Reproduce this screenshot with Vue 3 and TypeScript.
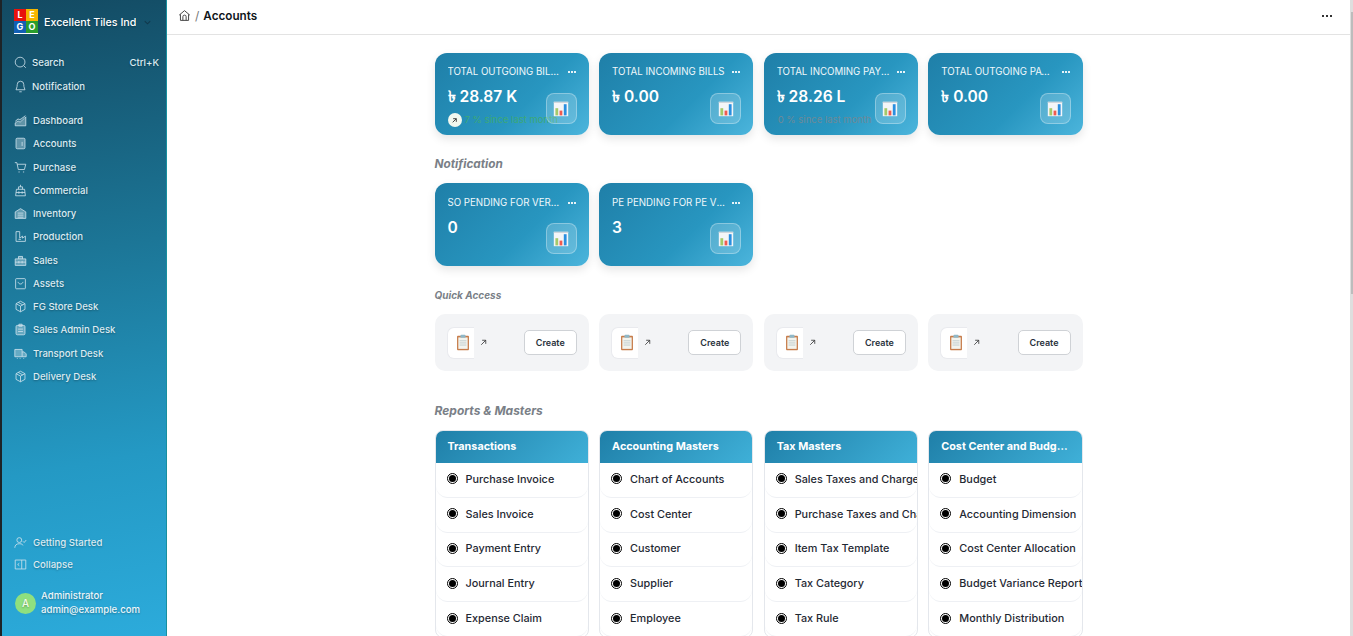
<script setup lang="ts">
interface NavItem {
  label: string
  icon: string
  filled?: boolean
}

interface Stat {
  title: string
  value: string
  note?: string
  up?: boolean
}

interface Section {
  title: string
  links: string[]
}

// icon paths drawn on a 16x16 box
const navItems: NavItem[] = [
  { label: 'Dashboard', filled: true, icon: 'M1.5 14.5v-3.500L5 8.500l2.500 1.500L12.500 5.500 14.500 3.500v11zM1.500 9L5 6l2.500 1.500L14 2' },
  { label: 'Accounts', filled: true, icon: 'M4 1.500h8A1.500 1.500 0 0 1 13.500 3v10a1.500 1.500 0 0 1-1.500 1.500H4A1.500 1.500 0 0 1 2.500 13V3A1.500 1.500 0 0 1 4 1.500zM10 6v5' },
  { label: 'Purchase', icon: 'M1 2h2.500l1.800 8.500h7.500l1.700-6.500H4M5.500 13.500h1.500M11 13.500h1.500' },
  { label: 'Commercial', icon: 'M3 6.500h10l1 8H2zM5.500 6.500V3.500h5v3M8 1v2.500M2.500 10.500h11M6 9v3M10 9v3' },
  { label: 'Inventory', filled: true, icon: 'M1.500 6L8 2l6.500 4v8h-13zM4.500 7.500h7M4.500 10h7M4.500 12.500h7' },
  { label: 'Production', icon: 'M2.500 2v12h11.500V7.500l-3.500 2.500V7.500L7 10V2zM5.500 11.500h3' },
  { label: 'Sales', filled: true, icon: 'M1.500 6h13v8h-13zM5.500 6V3h5v3M1.500 10h13M6 8.500v3M10 8.500v3' },
  { label: 'Assets', icon: 'M3 2h10a1 1 0 0 1 1 1v10.500a1 1 0 0 1-1 1H3a1 1 0 0 1-1-1V3a1 1 0 0 1 1-1zM5 6c.5 3.500 5.500 3.500 6 0' },
  { label: 'FG Store Desk', icon: 'M8 1.500l5.500 3v7L8 14.500l-5.500-3v-7zM2.500 4.500L8 7.500l5.500-3M8 7.500v7M5.200 3l5.600 3' },
  { label: 'Sales Admin Desk', filled: true, icon: 'M4 3h8a1.500 1.500 0 0 1 1.500 1.500v8.500a1.500 1.500 0 0 1-1.500 1.500H4A1.500 1.500 0 0 1 2.500 13V4.500A1.500 1.500 0 0 1 4 3zM6 1.500h4V4H6zM5 7.500h6M5 10.500h6' },
  { label: 'Transport Desk', filled: true, icon: 'M1 3h9v9H1zM10 6h2.500l2.500 2.500V12h-5M3.500 14h1M7 14h1M11.500 14h1' },
  { label: 'Delivery Desk', icon: 'M8 1.500l5.500 3v7L8 14.500l-5.500-3v-7zM2.500 4.500L8 7.500l5.500-3M8 7.500v7M5.200 3l5.600 3' },
]

const stats: Stat[] = [
  { title: 'TOTAL OUTGOING BILLS', value: '৳ 28.87 K', note: '7 % since last month', up: true },
  { title: 'TOTAL INCOMING BILLS', value: '৳ 0.00' },
  { title: 'TOTAL INCOMING PAYMENTS', value: '৳ 28.26 L', note: '0 % since last month' },
  { title: 'TOTAL OUTGOING PAYMENTS', value: '৳ 0.00' },
]

const pending: Stat[] = [
  { title: 'SO PENDING FOR VERIFICATION', value: '0' },
  { title: 'PE PENDING FOR PE VERIFICATION', value: '3' },
]

const sections: Section[] = [
  { title: 'Transactions', links: ['Purchase Invoice', 'Sales Invoice', 'Payment Entry', 'Journal Entry', 'Expense Claim'] },
  { title: 'Accounting Masters', links: ['Chart of Accounts', 'Cost Center', 'Customer', 'Supplier', 'Employee'] },
  { title: 'Tax Masters', links: ['Sales Taxes and Charges Template', 'Purchase Taxes and Charges Template', 'Item Tax Template', 'Tax Category', 'Tax Rule'] },
  { title: 'Cost Center and Budgeting', links: ['Budget', 'Accounting Dimension', 'Cost Center Allocation', 'Budget Variance Report', 'Monthly Distribution'] },
]
</script>

<template>
  <div class="app">
    <aside class="sidebar">
      <div class="brand">
        <div class="logo">
          <span class="red">L</span>
          <span class="yellow">E</span>
          <span class="blue">G</span>
          <span class="green">O</span>
        </div>
        <span class="brand-name">Excellent Tiles India</span>
        <svg class="chevron" viewBox="0 0 16 16"><path d="M4 6l4 4 4-4" /></svg>
      </div>

      <div class="side-top">
        <div class="side-row">
          <svg class="ico" viewBox="0 0 16 16"><circle cx="7.500" cy="7.500" r="6" /><path d="M12 12l2.500 2.500" /></svg>
          <span>Search</span>
          <span class="kbd">Ctrl+K</span>
        </div>
        <div class="side-row">
          <svg class="ico" viewBox="0 0 16 16"><path d="M8 1.500a4 4 0 0 1 4 4c0 4 1.500 5.500 1.500 6.500h-11c0-1 1.500-2.500 1.500-6.500a4 4 0 0 1 4-4zM6.500 14.500h3" /></svg>
          <span>Notification</span>
        </div>
      </div>

      <nav class="nav">
        <div v-for="item in navItems" :key="item.label" class="nav-row">
          <svg class="ico" :class="{ filled: item.filled }" viewBox="0 0 16 16"><path :d="item.icon" /></svg>
          <span>{{ item.label }}</span>
        </div>
      </nav>

      <div class="side-bottom">
        <div class="nav-row">
          <svg class="ico" viewBox="0 0 16 16"><circle cx="6.500" cy="5" r="3" /><path d="M1 14.500c0-3 2-5 5.500-5s4 1 4.500 2M11 6.500l1.500 1.500 2.500-3" /></svg>
          <span>Getting Started</span>
        </div>
        <div class="nav-row">
          <svg class="ico" viewBox="0 0 16 16"><path d="M1.500 2.500h13v11h-13zM9.500 2.500v11M6.500 6.500L4.500 8l2 1.500" /></svg>
          <span>Collapse</span>
        </div>
        <div class="user">
          <div class="avatar">A</div>
          <div class="user-text">
            <div>Administrator</div>
            <div>admin@example.com</div>
          </div>
        </div>
      </div>
    </aside>

    <div class="main">
      <header class="topbar">
        <svg class="home" viewBox="0 0 16 16"><path d="M1.500 7.500L8 2l6.500 5.500M3 6.500V14h10V6.500M6 14V9.500a2 2 0 0 1 4 0V14" /></svg>
        <span class="slash">/</span>
        <span class="crumb">Accounts</span>
        <div class="dots"><i></i><i></i><i></i></div>
      </header>

      <div class="content">
        <div class="grid">
          <div v-for="s in stats" :key="s.title" class="stat">
            <div class="stat-head">
              <span class="stat-title">{{ s.title }}</span>
              <span class="stat-more"><i></i><i></i><i></i></span>
            </div>
            <div class="stat-value">{{ s.value }}</div>
            <div v-if="s.note" class="stat-note" :class="{ up: s.up }">
              <span v-if="s.up" class="up-badge">
                <svg viewBox="0 0 10 10"><path d="M3 7l4-4M3.500 3H7v3.500" /></svg>
              </span>
              {{ s.note }}
            </div>
            <div class="stat-icon">
              <svg viewBox="0 0 20 20">
                <rect x="1" y="1" width="18" height="18" fill="#f4f6f8" />
                <rect x="1" y="1" width="18" height="1.500" fill="#cfd6dc" />
                <rect x="3" y="9" width="3.500" height="9" fill="#a4c96a" />
                <rect x="8.200" y="12" width="3.500" height="6" fill="#ef5b50" />
                <rect x="13.500" y="4" width="3.500" height="14" fill="#2a8fe0" />
              </svg>
            </div>
          </div>
        </div>

        <h3 class="heading notif">Notification</h3>
        <div class="grid">
          <div v-for="s in pending" :key="s.title" class="stat tall">
            <div class="stat-head">
              <span class="stat-title">{{ s.title }}</span>
              <span class="stat-more"><i></i><i></i><i></i></span>
            </div>
            <div class="stat-value">{{ s.value }}</div>
            <div class="stat-icon">
              <svg viewBox="0 0 20 20">
                <rect x="1" y="1" width="18" height="18" fill="#f4f6f8" />
                <rect x="1" y="1" width="18" height="1.500" fill="#cfd6dc" />
                <rect x="3" y="9" width="3.500" height="9" fill="#a4c96a" />
                <rect x="8.200" y="12" width="3.500" height="6" fill="#ef5b50" />
                <rect x="13.500" y="4" width="3.500" height="14" fill="#2a8fe0" />
              </svg>
            </div>
          </div>
        </div>

        <h3 class="heading quick-title">Quick Access</h3>
        <div class="grid">
          <div v-for="n in 4" :key="n" class="quick">
            <div class="quick-icon">
              <svg viewBox="0 0 16 20">
                <rect x="1" y="2" width="14" height="17" rx="1" fill="#c77c4a" />
                <rect x="2.500" y="4" width="11" height="13.500" fill="#f3f4ee" />
                <path d="M4 8h8M4 10.500h8M4 13h8" stroke="#b9c7c9" stroke-width="1" />
                <rect x="5" y="1" width="6" height="3.500" rx="1" fill="#8fb8c8" />
              </svg>
            </div>
            <svg class="quick-arrow" viewBox="0 0 10 10"><path d="M2.500 7.500l5-5M3.500 2.500h4v4" /></svg>
            <button class="create">Create</button>
          </div>
        </div>

        <h3 class="heading reports">Reports &amp; Masters</h3>
        <div class="grid">
          <div v-for="sec in sections" :key="sec.title" class="report">
            <div class="report-head">{{ sec.title }}</div>
            <div v-for="link in sec.links" :key="link" class="report-row">
              <span class="bullet"></span>
              <span class="report-link">{{ link }}</span>
            </div>
          </div>
        </div>
      </div>
    </div>

    <div class="scrollbar"><div class="thumb"></div></div>
  </div>
</template>

<style>
html,
body {
  margin: 0;
  height: 100%;
  overflow: hidden;
  background: #fff;
}
</style>

<style scoped>
.app {
  display: flex;
  height: 636px;
  font-family: Inter, "Noto Sans", sans-serif;
  color: #1f2933;
}

.sidebar {
  width: 167px;
  flex: none;
  box-sizing: border-box;
  height: 636px;
  display: flex;
  flex-direction: column;
  padding: 0 0 0 2px;
  background: linear-gradient(170deg, #134a62 0%, #1c7697 40%, #2499c4 72%, #2cabdb 100%);
  box-shadow: inset 2px 0 0 #1d2327, inset -1px 0 0 #17909f;
  color: #dcebf2;
  font-size: 9.600px;
  font-weight: 500;
  text-shadow: 0 1px 2px rgba(0, 0, 0, 0.3);
}

.brand {
  display: flex;
  align-items: center;
  height: 36px;
  margin-top: 4px;
  padding-left: 12px;
  box-sizing: border-box;
}

.logo {
  width: 24px;
  height: 24px;
  flex: none;
  display: grid;
  grid-template-columns: 1fr 1fr;
  grid-template-rows: 1fr 1fr;
  border-bottom: 1px solid #fff;
  font-size: 9px;
  font-weight: 700;
  line-height: 12px;
  text-align: center;
  text-shadow: none;
  margin-top: -1px;
}

.logo .red { background: #e8120c; color: #fff; }
.logo .yellow { background: #f5b600; color: #fff; }
.logo .blue { background: #125fb5; color: #fff; }
.logo .green { background: #2a9d2c; color: #fff; }

.brand-name {
  width: 92px;
  margin-left: 6px;
  overflow: hidden;
  white-space: nowrap;
  font-size: 10.700px;
  color: #fff;
}

.chevron {
  width: 11px;
  height: 11px;
  margin-left: 6px;
  fill: none;
  stroke: #11394c;
  stroke-width: 1.500;
}

.side-top {
  margin-top: 10px;
}

.side-row,
.nav-row {
  display: flex;
  align-items: center;
  gap: 6px;
  padding-left: 12px;
}

.side-row {
  height: 24px;
  gap: 5px;
}

.nav-row {
  height: 23.250px;
}

.ico {
  width: 13px;
  height: 13px;
  flex: none;
  fill: none;
  stroke: #cfe3ec;
  stroke-width: 1;
}

.ico.filled {
  fill: rgba(207, 227, 236, 0.4);
}

.kbd {
  margin-left: auto;
  margin-right: 8px;
}

.nav {
  margin-top: 11px;
}

.side-bottom {
  margin-top: auto;
  padding-bottom: 19px;
}

.side-bottom .nav-row {
  height: 22px;
}

.user {
  display: flex;
  align-items: center;
  gap: 5px;
  margin-top: 14px;
  padding-left: 13px;
}

.avatar {
  width: 21px;
  height: 21px;
  border-radius: 50%;
  background: #8fe07f;
  color: #f3fbe9;
  font-size: 10px;
  line-height: 21px;
  text-align: center;
  flex: none;
}

.user-text {
  line-height: 14px;
  color: #eef6fa;
}

.main {
  flex: 1;
  min-width: 0;
  height: 636px;
  overflow: hidden;
  background: #fff;
}

/* static scrollbar strip, the real one is hidden in this window */
.scrollbar {
  width: 3px;
  flex: none;
  background: #dedede;
}

.thumb {
  width: 2px;
  height: 282px;
  margin: 12px 0 0 1px;
  background: #bcbcbc;
}

.topbar {
  display: flex;
  align-items: center;
  height: 35px;
  box-sizing: border-box;
  padding: 0 18px 3px 11px;
  border-bottom: 1px solid #e3e3e3;
}

.home {
  width: 13px;
  height: 13px;
  fill: none;
  stroke: #444;
  stroke-width: 1.200;
}

.slash {
  margin: 0 4px;
  font-size: 12px;
  color: #777;
}

.crumb {
  font-size: 11.700px;
  font-weight: 600;
  color: #10151a;
}

.dots {
  display: flex;
  gap: 2px;
  margin-left: auto;
}

.dots i {
  display: block;
  width: 2px;
  height: 2px;
  background: #333;
}

.content {
  width: 648px;
  margin: 0 auto;
  padding: 18px 0 40px;
}

.grid {
  display: grid;
  grid-template-columns: repeat(4, minmax(0, 1fr));
  column-gap: 10.330px;
}

.stat {
  position: relative;
  height: 82px;
  box-sizing: border-box;
  padding: 13px 13px 0;
  border-radius: 12px;
  background: linear-gradient(135deg, #1f7fa8 0%, #2896c0 60%, #4cb5dc 100%);
  box-shadow: 0 4px 10px rgba(0, 0, 0, 0.1);
  color: #fff;
}

.stat.tall {
  height: 83px;
  padding-top: 14px;
}

.stat-head {
  display: flex;
  align-items: center;
  justify-content: space-between;
  gap: 5px;
  font-size: 9.700px;
  line-height: 12px;
  color: #f0f8fb;
}

.stat-title {
  max-width: 113.500px;
  overflow: hidden;
  white-space: nowrap;
  text-overflow: ellipsis;
}

.stat-more {
  display: flex;
  flex: none;
  gap: 1px;
}

.stat-more i {
  display: block;
  width: 2px;
  height: 2px;
  background: #e6f3f8;
}

.stat-value {
  margin-top: 9px;
  font-size: 15.600px;
  font-weight: 600;
  line-height: 20px;
}

.stat-note {
  position: absolute;
  left: 14px;
  bottom: 8px;
  display: flex;
  align-items: center;
  gap: 3px;
  font-size: 9.500px;
  line-height: 14px;
  white-space: nowrap;
  color: #6d8a98;
}

.stat-note.up {
  color: #3ca878;
}

.up-badge {
  display: inline-flex;
  width: 14px;
  height: 14px;
  border-radius: 50%;
  background: #f1f8ef;
  align-items: center;
  justify-content: center;
  margin-left: -1px;
}

.up-badge svg {
  width: 9px;
  height: 9px;
  fill: none;
  stroke: #333;
  stroke-width: 1;
}

.stat-icon {
  position: absolute;
  right: 12px;
  bottom: 11px;
  width: 31px;
  height: 31px;
  box-sizing: border-box;
  display: flex;
  align-items: center;
  justify-content: center;
  border: 1px solid rgba(255, 255, 255, 0.3);
  border-radius: 8px;
  background: rgba(255, 255, 255, 0.18);
}

.stat.tall .stat-icon {
  bottom: 12px;
}

.stat-icon svg {
  width: 16px;
  height: 16px;
}

.heading {
  margin: 0;
  font-style: italic;
  font-weight: 700;
  color: #7a7f87;
}

.notif {
  margin-top: 22px;
  margin-bottom: 11px;
  font-size: 11.800px;
  line-height: 15px;
}

.quick-title {
  margin-top: 22px;
  margin-bottom: 12px;
  font-size: 10px;
  line-height: 14px;
}

.quick {
  display: flex;
  align-items: center;
  height: 57px;
  box-sizing: border-box;
  padding: 0 12px;
  border-radius: 10px;
  background: #f3f4f6;
}

.quick-icon {
  width: 27px;
  height: 32px;
  flex: none;
  box-sizing: border-box;
  display: flex;
  align-items: center;
  padding-left: 8px;
  border: 1px solid #e9eaee;
  border-right: 0;
  border-radius: 7px 0 0 7px;
  background: #fff;
}

.quick-icon svg {
  width: 14px;
  height: 17px;
}

.quick-arrow {
  width: 9px;
  height: 9px;
  margin-left: 5px;
  fill: none;
  stroke: #333;
  stroke-width: 0.900;
}

.create {
  margin-left: auto;
  width: 53px;
  height: 25px;
  padding: 0;
  border: 1px solid #cfd2d6;
  border-radius: 5px;
  background: #fff;
  font-family: inherit;
  font-size: 9px;
  font-weight: 600;
  color: #29323c;
}

.reports {
  margin-top: 32px;
  margin-bottom: 12px;
  font-size: 12px;
  line-height: 15px;
}

.report {
  overflow: hidden;
  box-sizing: border-box;
  border: 1px solid #e4e7ec;
  border-radius: 8px;
  background: #fff;
}

.report-head {
  height: 32px;
  box-sizing: border-box;
  padding: 0 12px;
  overflow: hidden;
  white-space: nowrap;
  text-overflow: ellipsis;
  background: linear-gradient(135deg, #1f7fa8 0%, #3fb0d8 100%);
  color: #fff;
  font-size: 10.800px;
  font-weight: 700;
  line-height: 31px;
}

.report-row {
  display: flex;
  align-items: center;
  height: 34.800px;
  box-sizing: border-box;
  padding: 0 0 2px 11px;
  border-bottom: 1px solid #eef0f4;
  border-radius: 0 0 12px 12px;
}

.bullet {
  width: 7px;
  height: 7px;
  flex: none;
  border: 1px solid #000;
  border-radius: 50%;
  background: #000;
  background-clip: content-box;
  padding: 1px;
}

.report-link {
  margin-left: 8px;
  font-size: 10.850px;
  font-weight: 500;
  white-space: nowrap;
  color: #1f2933;
}
</style>
